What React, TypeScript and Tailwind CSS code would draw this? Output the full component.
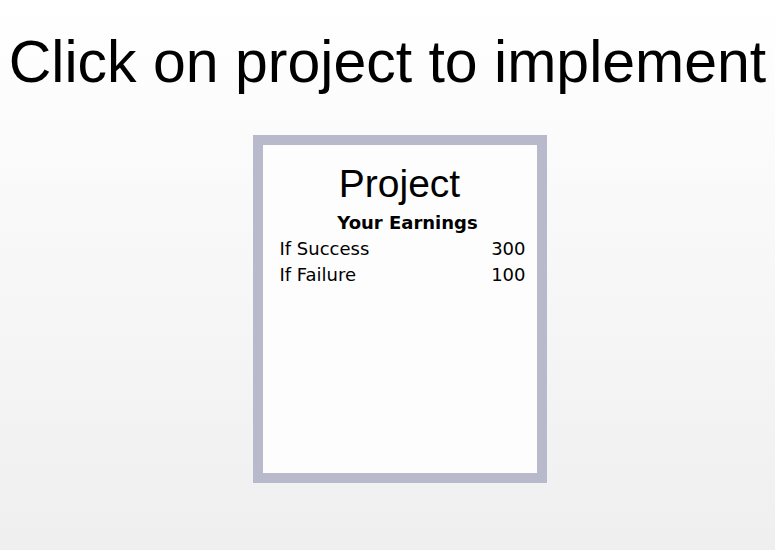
import React from 'react';

const rows = [
  { label: 'If Success', value: 300 },
  { label: 'If Failure', value: 100 },
];

export default function App() {
  return (
    <div className="w-[775px] h-[550px] overflow-hidden bg-gradient-to-b from-white to-[#efefef] flex flex-col items-center">
      <h1 className="mt-[26px] text-[59px] leading-[72px] text-black font-['Liberation_Sans',Arial,sans-serif] whitespace-nowrap">
        Click on project to implement
      </h1>

      {/* Project card */}
      <button className="mt-[37px] ml-[24px] w-[294px] h-[348px] border-[10px] border-[#b8b9ca] bg-[#fdfdfd] flex flex-col items-stretch text-left cursor-pointer">
        <div className="mt-[17px] text-center text-[39px] leading-[44px] text-black font-['Liberation_Sans',Arial,sans-serif]">
          Project
        </div>
        <div className="mt-[4px] pl-[16px] text-center text-[18px] leading-[26px] font-bold text-black font-['DejaVu_Sans',Verdana,sans-serif]">
          Your Earnings
        </div>
        <div className="pl-[17px] pr-[11px] font-['DejaVu_Sans',Verdana,sans-serif] text-[18px] leading-[26px] text-black">
          {rows.map((r) => (
            <div key={r.label} className="flex justify-between">
              <span>{r.label}</span>
              <span>{r.value}</span>
            </div>
          ))}
        </div>
      </button>
    </div>
  );
}
